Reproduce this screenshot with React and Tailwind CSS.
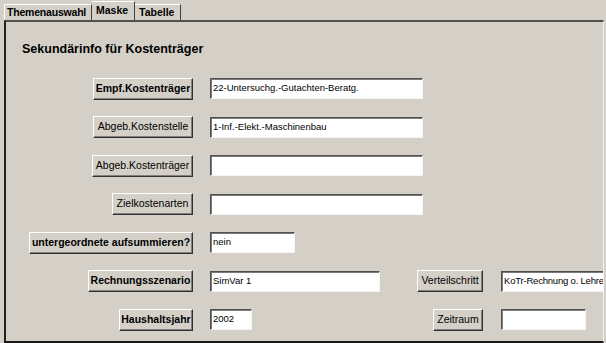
const btn =
  'flex h-[22px] shrink-0 items-center justify-center whitespace-nowrap border border-t-white border-l-white border-r-[#303030] border-b-[#303030] bg-[#d4d0c8] text-[10.5px] text-black shadow-[inset_-1px_-1px_0_#808080]'
const field =
  'flex h-[21px] shrink-0 items-center whitespace-nowrap overflow-hidden border border-t-[#505050] border-l-[#505050] border-r-[#f4f4f4] border-b-[#f4f4f4] bg-white pl-[2px] text-[9.5px] text-black shadow-[inset_1px_1px_0_#7a7a7a]'

function Btn({ w, bold, children }) {
  return <div className={`${btn} ${w} ${bold ? 'font-bold' : ''}`}>{children}</div>
}

function Field({ w, value, extra = '' }) {
  return <div className={`${field} ${w} ${extra}`}>{value}</div>
}

function Row({ label, bw, bold, fw, value, children }) {
  return (
    <div className="flex h-[22px] items-center">
      <div className="flex w-[187px] shrink-0 justify-end">
        <Btn w={bw} bold={bold}>{label}</Btn>
      </div>
      <div className="ml-[17px] flex w-[207px] shrink-0">
        <Field w={fw} value={value} />
      </div>
      {children}
    </div>
  )
}

export default function App() {
  return (
    <div className="flex h-[343px] w-[606px] flex-col overflow-hidden bg-[#d4d0c8] font-['Liberation_Sans',Arial,sans-serif]">
      <div className="flex h-[20px] items-end pl-[4px]">
        <div className="flex h-[16px] w-[88px] items-center whitespace-nowrap border-l border-t border-r border-l-white border-t-white border-r-[#404040] pl-[2px] text-[10.5px] font-bold tracking-[-0.2px]">
          Themenauswahl
        </div>
        <div className="flex h-[19px] w-[43px] items-start border-t border-r border-t-white border-r-[#404040] pl-[4px] pt-[1px] text-[10.5px] font-bold">
          Maske
        </div>
        <div className="flex h-[16px] w-[46px] items-center border-t border-r border-t-white border-r-[#404040] pl-[4px] text-[10.5px] font-bold">
          Tabelle
        </div>
      </div>
      <div className="ml-[4px] flex h-[323px] w-[600px] flex-col overflow-hidden border-t-2 border-l-2 border-b-2 border-r border-t-[#505050] border-l-[#222] border-b-[#1a1a1a] border-r-[#f2f2f2]">
        <div className="pl-[16px] pt-[20px] text-[12.5px] font-bold leading-[15px] text-black">
          Sekundärinfo für Kostenträger
        </div>
        <div className="mt-[20.5px] flex flex-col gap-[16.5px]">
          <Row label="Empf.Kostenträger" bw="w-[100px]" bold fw="w-[213px]" value="22-Untersuchg.-Gutachten-Beratg." />
          <Row label="Abgeb.Kostenstelle" bw="w-[100px]" fw="w-[213px]" value="1-Inf.-Elekt.-Maschinenbau" />
          <Row label="Abgeb.Kostenträger" bw="w-[101px]" fw="w-[213px]" value="" />
          <Row label="Zielkostenarten" bw="w-[81px]" fw="w-[213px]" value="" />
          <Row label="untergeordnete aufsummieren?" bw="w-[164px]" bold fw="w-[85px]" value="nein" />
          <Row label="Rechnungsszenario" bw="w-[105px]" bold fw="w-[170px]" value="SimVar 1">
            <div className="flex w-[66px] shrink-0 justify-end">
              <Btn w="w-[66px]">Verteilschritt</Btn>
            </div>
            <div className="ml-[18px] shrink-0">
              <Field w="w-[120px]" value="KoTr-Rechnung o. Lehre" extra="tracking-[-0.2px]" />
            </div>
          </Row>
          <Row label="Haushaltsjahr" bw="w-[74px]" bold fw="w-[42px]" value="2002">
            <div className="flex w-[66px] shrink-0 justify-end">
              <Btn w="w-[50px]">Zeitraum</Btn>
            </div>
            <div className="ml-[18px] shrink-0">
              <Field w="w-[85px]" value="" />
            </div>
          </Row>
        </div>
      </div>
    </div>
  )
}
